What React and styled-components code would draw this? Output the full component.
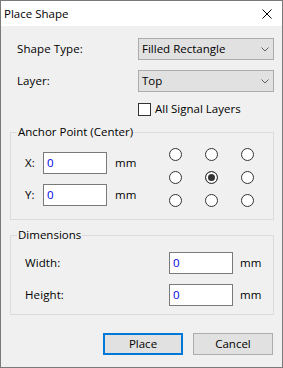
import styled, { createGlobalStyle } from 'styled-components';
import { useState } from 'react';

const GlobalStyle = createGlobalStyle`
  html, body {
    margin: 0;
    padding: 0;
    background: #f0f0f0;
  }
  body {
    font-family: "Open Sans", "Noto Sans", sans-serif;
    font-size: 11.5px;
    color: #000;
  }
  * { box-sizing: border-box; }
`;

function App() {
    const [anchor, setAnchor] = useState(4);
    const [allLayers, setAllLayers] = useState(false);

    return (
        <>
            <GlobalStyle />
            <Window>
                <TitleBar>
                    <Title>Place Shape</Title>
                    <CloseButton aria-label="Close">
                        <svg width="10" height="10" viewBox="0 0 10 10">
                            <path d="M0.5 0.5 L9.5 9.5 M9.5 0.5 L0.5 9.5" stroke="#000" strokeWidth="1" fill="none" />
                        </svg>
                    </CloseButton>
                </TitleBar>

                <Body>
                    <FormRow>
                        <Label>Shape Type:</Label>
                        <Combo>
                            <span>Filled Rectangle</span>
                            <Chevron />
                        </Combo>
                    </FormRow>
                    <FormRow $gap={10}>
                        <Label>Layer:</Label>
                        <Combo>
                            <span>Top</span>
                            <Chevron />
                        </Combo>
                    </FormRow>
                    <CheckRow onClick={() => setAllLayers((v) => !v)}>
                        <CheckBox>
                            {allLayers && (
                                <svg width="11" height="11" viewBox="0 0 11 11">
                                    <path d="M2 5.5 L4.5 8 L9 3" stroke="#333" strokeWidth="1.4" fill="none" />
                                </svg>
                            )}
                        </CheckBox>
                        <span>All Signal Layers</span>
                    </CheckRow>

                    <Group $top={9} $padTop={4} $padBottom={7}>
                        <Legend>Anchor Point (Center)</Legend>
                        <AnchorArea>
                            <CoordColumn>
                                <CoordRow>
                                    <CoordLabel>X:</CoordLabel>
                                    <TextBox>0</TextBox>
                                    <Unit>mm</Unit>
                                </CoordRow>
                                <CoordRow>
                                    <CoordLabel>Y:</CoordLabel>
                                    <TextBox>0</TextBox>
                                    <Unit>mm</Unit>
                                </CoordRow>
                            </CoordColumn>
                            <RadioGrid>
                                {Array.from({ length: 9 }).map((_, i) => (
                                    <RadioCell key={i} onClick={() => setAnchor(i)}>
                                        <Radio $checked={anchor === i} />
                                    </RadioCell>
                                ))}
                            </RadioGrid>
                        </AnchorArea>
                    </Group>

                    <Group $top={8} $padTop={10} $padBottom={8}>
                        <Legend>Dimensions</Legend>
                        <DimGrid>
                            <Label>Width:</Label>
                            <TextBox>0</TextBox>
                            <Unit $left={7}>mm</Unit>
                            <Label>Height:</Label>
                            <TextBox>0</TextBox>
                            <Unit $left={7}>mm</Unit>
                        </DimGrid>
                    </Group>

                    <Buttons>
                        <Button $default>Place</Button>
                        <Button>Cancel</Button>
                    </Buttons>
                </Body>
            </Window>
        </>
    );
}

function Chevron() {
    return (
        <svg width="8" height="5" viewBox="0 0 8 5">
            <path d="M0.5 0.5 L4 4 L7.5 0.5" stroke="#606060" strokeWidth="1" fill="none" />
        </svg>
    );
}

const Window = styled.div`
    width: 283px;
    height: 368px;
    border: 1px solid #7a7a7a;
    background: #f0f0f0;
    display: flex;
    flex-direction: column;
`;

const TitleBar = styled.div`
    height: 25px;
    background: #ffffff;
    display: flex;
    align-items: center;
    justify-content: space-between;
    padding: 0 10px 0 3px;
`;

const Title = styled.div`
    font-size: 11.5px;
    line-height: 14px;
`;

const CloseButton = styled.div`
    display: flex;
    width: 10px;
    height: 10px;
    margin-top: 1px;
    cursor: pointer;
`;

const Body = styled.div`
    display: flex;
    flex-direction: column;
    padding: 12px 8px 0 9px;
`;

const FormRow = styled.div`
    display: grid;
    grid-template-columns: 128px 136px;
    align-items: center;
    height: 22px;
    margin-top: ${({ $gap }) => $gap || 0}px;
`;

const Label = styled.div`
    padding-left: 7px;
    line-height: 14px;
    letter-spacing: 0.1px;
`;

const Combo = styled.div`
    height: 22px;
    border: 1px solid #adadad;
    background: #e1e1e1;
    display: flex;
    align-items: center;
    justify-content: space-between;
    padding: 0 4px 0 3px;
    line-height: 14px;
`;

const CheckRow = styled.div`
    display: flex;
    align-items: center;
    gap: 4px;
    height: 14px;
    margin-top: 10px;
    padding-left: 128px;
    line-height: 14px;
    cursor: default;
`;

const CheckBox = styled.div`
    width: 13px;
    height: 13px;
    border: 1px solid #333333;
    background: #ffffff;
    display: flex;
    align-items: center;
    justify-content: center;
`;

const Group = styled.fieldset`
    margin: ${({ $top }) => $top}px 0 0 0;
    width: 264px;
    min-width: 0;
    border: 1px solid #dcdcdc;
    padding: ${({ $padTop }) => $padTop}px 0 ${({ $padBottom }) => $padBottom}px 0;
`;

const Legend = styled.legend`
    margin-left: 6px;
    padding: 0 1px;
    line-height: 14px;
`;

const AnchorArea = styled.div`
    display: flex;
    align-items: flex-start;
    padding-left: 14px;
    padding-right: 8px;
`;

const CoordColumn = styled.div`
    display: flex;
    flex-direction: column;
    gap: 10px;
    margin-top: 9px;
`;

const CoordRow = styled.div`
    display: flex;
    align-items: center;
    height: 22px;
`;

const CoordLabel = styled.div`
    width: 18px;
    line-height: 14px;
`;

const TextBox = styled.div`
    width: 64px;
    height: 22px;
    border: 1px solid #7a7a7a;
    background: #ffffff;
    color: #0000e6;
    padding-left: 3px;
    display: flex;
    align-items: center;
    line-height: 14px;
`;

const Unit = styled.div`
    margin-left: ${({ $left }) => $left || 8}px;
    line-height: 14px;
`;

const RadioGrid = styled.div`
    margin-left: auto;
    display: grid;
    grid-template-columns: repeat(3, 36px);
    grid-auto-rows: 23px;
`;

const RadioCell = styled.div`
    display: flex;
    align-items: center;
    justify-content: center;
    cursor: default;
`;

const Radio = styled.div`
    width: 13px;
    height: 13px;
    border-radius: 50%;
    border: 1px solid #333333;
    background: ${({ $checked }) => ($checked ? '#333333' : '#ffffff')};
    box-shadow: inset 0 0 0 2px #ffffff;
`;

const DimGrid = styled.div`
    display: grid;
    grid-template-columns: 151px 64px auto;
    grid-auto-rows: 22px;
    row-gap: 10px;
    align-items: center;
    padding-left: 7px;
`;

const Buttons = styled.div`
    display: flex;
    justify-content: flex-end;
    gap: 10px;
    margin-top: 18px;
    padding-right: 1px;
`;

const Button = styled.div`
    width: 80px;
    height: 22px;
    background: #e1e1e1;
    border: ${({ $default }) => ($default ? '2px solid #0078d7' : '1px solid #adadad')};
    display: flex;
    align-items: center;
    justify-content: center;
    line-height: 14px;
    cursor: default;
`;

export default App;
